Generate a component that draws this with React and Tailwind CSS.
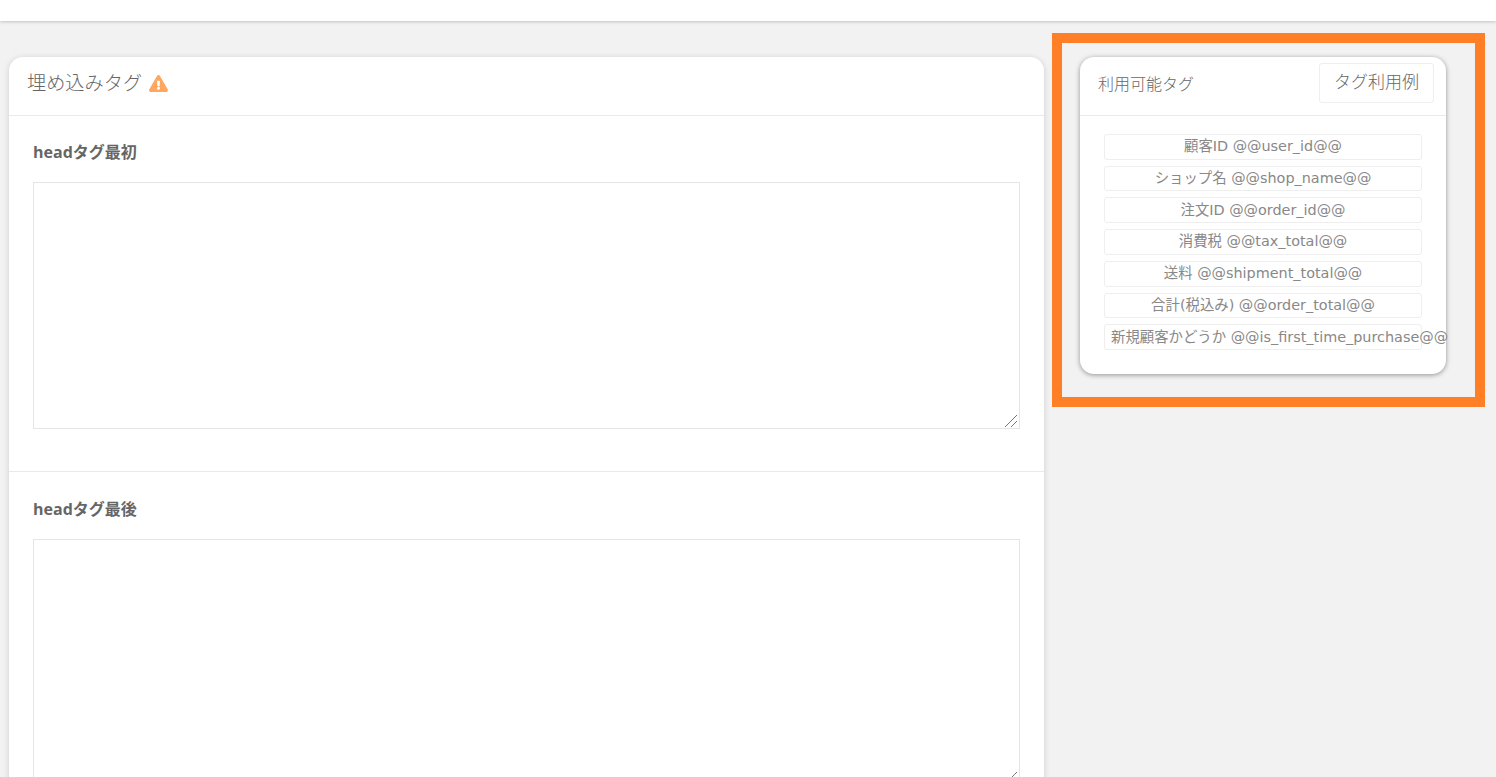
import { FaExclamationTriangle } from "react-icons/fa";

const tags = [
  "顧客ID @@user_id@@",
  "ショップ名 @@shop_name@@",
  "注文ID @@order_id@@",
  "消費税 @@tax_total@@",
  "送料 @@shipment_total@@",
  "合計(税込み) @@order_total@@",
  "新規顧客かどうか @@is_first_time_purchase@@",
];

const TagSection = ({ label, last }) => (
  <div className={`px-6 ${last ? "pt-[25px]" : "pt-[24px] pb-[42px] border-b border-[#e9e9e9]"}`}>
    <label className="block h-[24px] leading-[24px] text-base font-bold text-[#666] mb-[18px]">{label}</label>
    <div className="relative h-[247px]">
      <textarea className="block w-full h-full resize-none bg-white border border-[#e5e5e5] outline-none" />
      {/* resize grip */}
      <svg className="absolute right-[1px] bottom-[1px]" width="14" height="14" viewBox="0 0 14 14" fill="none" stroke="#777" shapeRendering="crispEdges">
        <path d="M0 13 L12 1" />
        <path d="M6 13 L12 7" />
      </svg>
    </div>
  </div>
);

export default function App() {
  return (
    <div className="h-[777px] overflow-hidden bg-[#f2f2f2] text-[#777] font-['Open_Sans','Noto_Sans_CJK_JP',sans-serif]">
      {/* Top bar */}
      <div className="h-[21px] bg-white shadow-[0_1px_3px_rgba(0,0,0,0.2)]" />

      <div className="flex items-start pl-[9px] pt-[12px]">
        {/* Main card */}
        <div className="w-[1035px] mt-[24px] shrink-0 bg-white rounded-t-[14px] shadow-[0_1px_6px_rgba(0,0,0,0.15)]">
          <div className="h-[59px] flex items-center px-[18px] pb-[6px] border-b border-[#e9e9e9]">
            <h2 className="text-[19.2px] font-light text-[#666] leading-none">埋め込みタグ</h2>
            <FaExclamationTriangle className="ml-[7px] mt-[1px] text-[19px] text-[#ffa75e]" />
          </div>
          <TagSection label="headタグ最初" />
          <TagSection label="headタグ最後" last />
        </div>

        {/* Available tags, highlighted */}
        <div className="w-[433px] h-[374px] ml-[8px] shrink-0 border-[10px] border-[#ff7f27] pl-[18px] pt-[14px]">
          <div className="w-[366px] h-[317px] bg-white rounded-[14px] shadow-[0_1px_5px_rgba(0,0,0,0.4)]">
            <div className="h-[59px] flex items-center justify-between pl-[18px] pr-[12px] pb-[7px] border-b border-[#e9e9e9]">
              <h3 className="text-base font-light text-[#666] mt-[2px]">利用可能タグ</h3>
              <button className="w-[115px] h-[40px] pb-[1px] text-[17px] font-light text-[#666] border border-[#eee] rounded-[3px]">
                タグ利用例
              </button>
            </div>
            <div className="pt-[17.8px] pl-[24px]">
              {tags.map((t) => (
                <div
                  key={t}
                  className="w-[318px] h-[25.75px] mb-[6px] px-[6px] pt-[0.4px] border border-[#eee] rounded-[3px] text-[14.4px] leading-[22px] text-[#888] text-center whitespace-nowrap font-['DejaVu_Sans','Noto_Sans_CJK_JP',sans-serif]"
                >
                  {t}
                </div>
              ))}
            </div>
          </div>
        </div>
      </div>
    </div>
  );
}
